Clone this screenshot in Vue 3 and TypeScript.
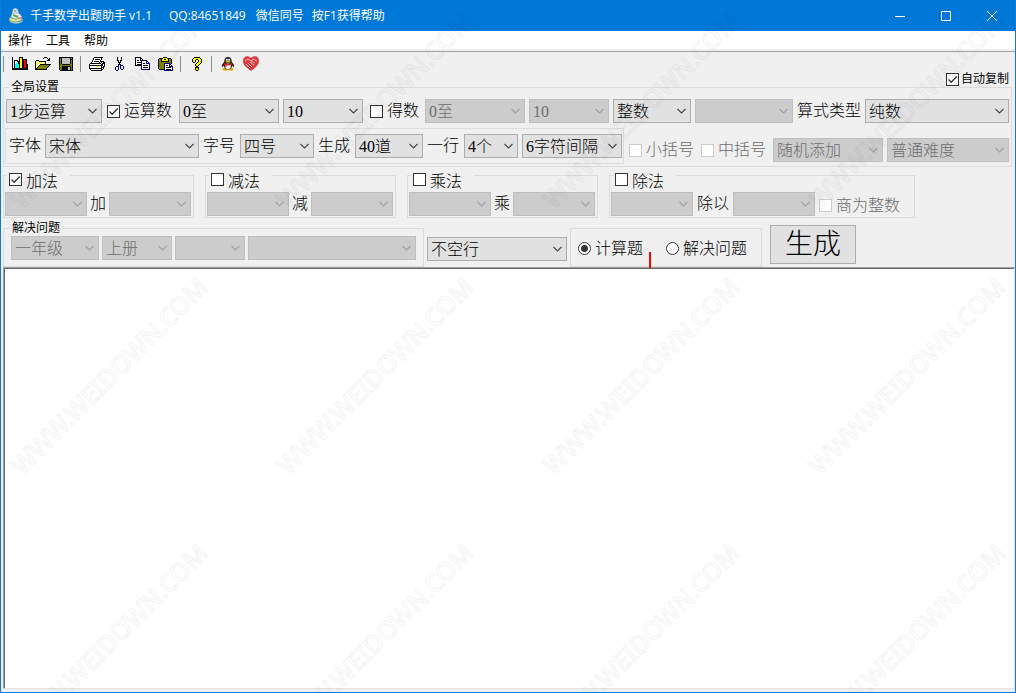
<script setup lang="ts">
import { reactive, ref } from 'vue'

interface Run { x: number; y: number; w: number; fill: string }
interface Glyph { width: number; height: number; runs: Run[] }
interface Operation { id: string; name: string; joint: string; on: boolean; whole?: boolean }

const palette: Record<string, string> = {
  k: '#000', w: '#fff', y: '#808000', Y: '#ffff00', b: '#000080',
  r: '#ff0000', c: '#00ffff', g: '#c0c0c0',
}

function glyph(rows: string[]): Glyph {
  const runs: Run[] = []
  rows.forEach((row, y) => {
    let x = 0
    while (x < row.length) {
      let end = x + 1
      while (end < row.length && row[end] === row[x]) end++
      if (row[x] !== '.') runs.push({ x, y, w: end - x, fill: palette[row[x]] })
      x = end
    }
  })
  return { width: Math.max(...rows.map(r => r.length)), height: rows.length, runs }
}

const chart = glyph([
  'k......kkkk.....',
  'k......kYYk.....',
  'k......kYYkkkkk.',
  'k.kkkk.kYYkkrrk.',
  'k.kwwkkkYYkkrrk.',
  'k.kwwckkYYkkrrk.',
  'k.kwcckkYYkkrrk.',
  'k.kcccckYYkkrrkk',
  'k.kcccckYYkkrrkk',
  'k.kcccckYYkkrrkk',
  'k.kcccckYYkkrrkk',
  'kkkkkkkkkkkkkkkk',
  'kkkkkkkkkkkkkkkk',
])
const open = glyph([
  '.........kkk....',
  '........k...k.k.',
  '.............kk.',
  '.kkk........kkk.',
  'kYwYkkkkkkk.....',
  'kwYwYwYwYwk.....',
  'kYwYwYwYwYk.....',
  'kwYwYkkkkkkkkkkk',
  'kYwYkyyyyyyyyyk.',
  'kwYkyyyyyyyyyk..',
  'kYkyyyyyyyyyk...',
  'kkyyyyyyyyyk....',
  'kkkkkkkkkkkk....',
])
const save = glyph([
  'kkkkkkkkkkkkkk',
  'kykggggggggkgk',
  'kykggggggggkkk',
  'kykggggggggkyk',
  'kykggggggggkyk',
  'kykggggggggkyk',
  'kykggggggggkyk',
  'kyykkkkkkkkyyk',
  'kyyyyyyyyyyyyk',
  'kyykkkkkkkkkyk',
  'kyykkkkkkggkyk',
  'kyykkkkkkggkyk',
  'kyykkkkkkggkyk',
  '.kkkkkkkkkkkkk',
])
const print = glyph([
  '.....kkkkkkkkk..',
  '....kwwwwwwwk...',
  '....kwkkkkkwk...',
  '...kwwwwwwwk....',
  '...kwkkkkkwkkkk.',
  '..kwwwwwwwk.k.kk',
  '.kkkkkkkkkkk.kkk',
  'kwwwwwwwwwwwkkwk',
  'kkkkkkkkkkkkkkwk',
  'kwwwwwwYYYwwkwkk',
  'kwwwwwwwwwwwkkk.',
  'kkkkkkkkkkkkkwk.',
  '.kwwwwwwwwwwkk..',
  '..kkkkkkkkkkk...',
])
const cut = glyph([
  '..k...k...',
  '..k...k...',
  '..k...k...',
  '..kk.kk...',
  '...k.k....',
  '...kkk....',
  '....k.....',
  '...bkb....',
  '...b.bbb..',
  '.bbb.b..b.',
  'b..b.b..b.',
  'b..b.b..b.',
  'b..b..bb..',
  '.bb.......',
])
const copy = glyph([
  'kkkkkk.........',
  'kwwwwkk........',
  'kwwwwkwk.......',
  'kwkkwkbbbbbb...',
  'kwwwwwbwwwwbb..',
  'kwkkkkbwwwwbwb.',
  'kwwwwwbwkkwbbbb',
  'kwkkkkbwwwwwwwb',
  'kkkkkkbwkkkkkwb',
  '......bwwwwwwwb',
  '......bwkkkkkwb',
  '......bwwwwwwwb',
  '......bbbbbbbbb',
])
const paste = glyph([
  '.....kkkk......',
  '.kkkkYYYYkkkk..',
  'kyykYYkkYYkyyk.',
  'kyykYYYYYYkyyk.',
  'kyykkkkkkkkyyk.',
  'kyyyyyyyyyyyyk.',
  'kyyyyybbbbbbyk.',
  'kyyyyybwwwwbb..',
  'kyyyyybwkkwbwb.',
  'kyyyyybwwwwbbbb',
  'kyyyyybwkkkkkwb',
  'kyyyyybwwwwwwwb',
  '.kkkkkbwkkkkkwb',
  '......bbbbbbbbb',
])
const help = glyph([
  '..kkkkkk..',
  '.kYYYYYYk.',
  'kYYYkkYYYk',
  'kYYk..kYYk',
  'kYYk..kYYk',
  '.kk..kYYYk',
  '....kYYYk.',
  '...kYYYk..',
  '...kYYk...',
  '....kk....',
  '...kkkk...',
  '...kYYk...',
  '...kYYk...',
  '....kk....',
])

const toolGroups = [
  [{ label: '新建', icon: chart }, { label: '打开', icon: open }, { label: '保存', icon: save }],
  [{ label: '打印', icon: print }, { label: '剪切', icon: cut }, { label: '复制', icon: copy }, { label: '粘贴', icon: paste }],
  [{ label: '帮助', icon: help }],
]

const menus = ['操作', '工具', '帮助']
const operations = reactive<Operation[]>([
  { id: 'add', name: '加法', joint: '加', on: true },
  { id: 'sub', name: '减法', joint: '减', on: false },
  { id: 'mul', name: '乘法', joint: '乘', on: false },
  { id: 'div', name: '除法', joint: '除以', on: false, whole: true },
])

const autoCopy = ref(true)
const operandOn = ref(true)
const resultOn = ref(false)
const mode = ref('calc')
const output = ref('')

const marks = [-1, 0, 1, 2].flatMap(row => [0, 1, 2, 3].map(col => ({ x: 21 + col * 266, y: 210 + row * 266 })))
</script>

<template>
  <div class="window">
    <header class="titlebar">
      <svg class="app-icon" viewBox="0 0 16 16" aria-hidden="true">
        <path d="M1 11Q8 15 15 11L14 14Q8 17 2 14z" fill="#e8d9b0" />
        <path d="M1 9h13l1 4q-7 3-14 0z" fill="#57a7b0" />
        <path d="M2 11q6 3 11 0" stroke="#f4e27a" stroke-width="2" fill="none" />
        <path d="M4 6h8l2 3q-5 3-11 0z" fill="#e9edf0" />
        <path d="M5 7l5 2" stroke="#70a75a" stroke-width="2" />
        <path d="M5 1l3-1 2 2 1 4H4z" fill="#c8dae2" />
        <circle cx="7" cy="3" r="1" fill="#e79b62" />
        <path d="M10 10h4" stroke="#d96b4b" />
      </svg>
      <h1 class="title"><span>千手数学出题助手 v1.1</span><span>QQ:84651849</span><span class="near">微信同号</span><span class="near">按F1获得帮助</span></h1>
      <div class="window-buttons">
        <button type="button" aria-label="最小化"><svg viewBox="0 0 10 10"><path d="M0 5.5h10" /></svg></button>
        <button type="button" aria-label="最大化"><svg viewBox="0 0 10 10"><path d="M.5.5h9v9h-9z" /></svg></button>
        <button type="button" aria-label="关闭"><svg viewBox="0 0 10 10"><path d="M0 0l10 10M10 0L0 10" /></svg></button>
      </div>
    </header>

    <nav class="menubar">
      <button v-for="item in menus" :key="item" type="button">{{ item }}</button>
    </nav>

    <main class="panel">
      <div class="top">
        <div class="toolbar" role="toolbar">
          <div v-for="(group, g) in toolGroups" :key="g" class="tool-group">
            <button v-for="tool in group" :key="tool.label" type="button" :aria-label="tool.label">
              <svg :width="tool.icon.width" :height="tool.icon.height" :viewBox="`0 0 ${tool.icon.width} ${tool.icon.height}`" shape-rendering="crispEdges">
                <rect v-for="(run, i) in tool.icon.runs" :key="i" :x="run.x" :y="run.y" :width="run.w" height="1" :fill="run.fill" />
              </svg>
            </button>
          </div>
          <div class="tool-group">
            <button type="button" aria-label="QQ">
              <svg width="14" height="14" viewBox="0 0 14 15">
                <ellipse cx="4" cy="13" rx="3" ry="1.6" fill="#f0a000" />
                <ellipse cx="10" cy="13" rx="3" ry="1.6" fill="#f0a000" />
                <path d="M7 0C4 0 3 2 3 5 1 7 0 9 .5 11l2-1.5C3 12 4.5 13.5 7 13.5S11 12 11.5 9.5l2 1.5C14 9 13 7 11 5 11 2 10 0 7 0z" fill="#222" />
                <ellipse cx="7" cy="10" rx="3" ry="3" fill="#fff" />
                <circle cx="5.7" cy="3" r="1.1" fill="#fff" />
                <circle cx="8.3" cy="3" r="1.1" fill="#fff" />
                <ellipse cx="7" cy="5" rx="2.6" ry="1" fill="#f5b400" />
                <path d="M2.5 6.5q4.5 2 9 0v1.5q-4.5 2-9 0z" fill="#e02020" />
                <path d="M4 8h1.5v2.5H4z" fill="#e02020" />
              </svg>
            </button>
            <button type="button" aria-label="支持">
              <svg width="16" height="15" viewBox="0 0 16 15">
                <path d="M8 15C4 12 0 9 0 5 0 0 5-1 8 2c3-3 8-2 8 3 0 4-4 7-8 10z" fill="#e0393e" />
                <path d="M2 5l3-2 3 2 2-2 4 2M3 8l4 4M5 7l4 4M7 6l4 3M8 5l4 2" fill="none" stroke="#f3b9b6" />
              </svg>
            </button>
          </div>
        </div>
        <label class="check small"><input v-model="autoCopy" type="checkbox">自动复制</label>
      </div>

      <fieldset class="global">
        <legend>全局设置</legend>
        <div class="row first">
          <select class="w96" aria-label="步数"><option>1步运算</option></select>
          <label class="check operand"><input v-model="operandOn" type="checkbox">运算数</label>
          <select class="w100" aria-label="运算数下限"><option>0至</option></select>
          <select class="w80" aria-label="运算数上限"><option>10</option></select>
          <label class="check result"><input v-model="resultOn" type="checkbox">得数</label>
          <select class="w100" aria-label="得数下限" disabled><option>0至</option></select>
          <select class="w80" aria-label="得数上限" disabled><option>10</option></select>
          <select class="w78" aria-label="数型"><option>整数</option></select>
          <select class="w98" aria-label="小数位" disabled><option></option></select>
          <label for="formula">算式类型</label>
          <select id="formula" class="fill"><option>纯数</option></select>
        </div>
        <div class="row second">
          <div class="row frame format">
            <label for="font" class="tight">字体</label>
            <select id="font" class="w154"><option>宋体</option></select>
            <label for="size">字号</label>
            <select id="size" class="w74"><option>四号</option></select>
            <label for="count">生成</label>
            <select id="count" class="w68"><option>40道</option></select>
            <label for="columns">一行</label>
            <select id="columns" class="w54"><option>4个</option></select>
            <select class="w100" aria-label="间隔"><option>6字符间隔</option></select>
          </div>
          <div class="row brackets">
            <label class="check off"><input type="checkbox" disabled>小括号</label>
            <label class="check off"><input type="checkbox" disabled>中括号</label>
            <select class="w110" aria-label="添加方式" disabled><option>随机添加</option></select>
            <select class="fill" aria-label="难度" disabled><option>普通难度</option></select>
          </div>
        </div>
      </fieldset>

      <div class="operations">
        <section v-for="op in operations" :key="op.id" class="frame operation" :class="{ wide: op.whole }">
          <label class="check heading"><input v-model="op.on" type="checkbox">{{ op.name }}</label>
          <div class="row operands">
            <select class="w82" :aria-label="op.name + '左'" disabled><option></option></select>
            <span>{{ op.joint }}</span>
            <select class="w82" :aria-label="op.name + '右'" disabled><option></option></select>
            <label v-if="op.whole" class="check off whole"><input type="checkbox" disabled>商为整数</label>
          </div>
        </section>
      </div>

      <div class="bottom">
        <fieldset class="problems">
          <legend>解决问题</legend>
          <div class="row">
            <select class="w88" aria-label="年级" disabled><option>一年级</option></select>
            <select class="w70" aria-label="册" disabled><option>上册</option></select>
            <select class="w70" aria-label="单元" disabled><option></option></select>
            <select class="w168" aria-label="题型" disabled><option></option></select>
          </div>
        </fieldset>
        <select class="w140 blank" aria-label="空行"><option>不空行</option></select>
        <div class="frame modes" role="radiogroup" aria-label="题目类型">
          <label class="check"><input v-model="mode" type="radio" value="calc">计算题</label>
          <label class="check"><input v-model="mode" type="radio" value="solve">解决问题</label>
          <i class="marker"></i>
        </div>
        <button type="button" class="generate">生成</button>
      </div>
    </main>

    <textarea v-model="output" class="output" aria-label="题目"></textarea>

    <svg class="watermark" aria-hidden="true">
      <text v-for="(m, i) in marks" :key="i" :transform="`translate(${m.x} ${m.y}) rotate(-45)`">WWW.WEIDOWN.COM</text>
    </svg>
  </div>
</template>

<style>
html, body, #app { height: 100%; }
body { margin: 0; }
</style>

<style scoped>
* { box-sizing: border-box; }
.window {
  position: relative;
  display: flex;
  flex-direction: column;
  height: 100vh;
  overflow: hidden;
  border: 1px solid #0f7ad6;
  border-top: 0;
  background: #f0f0f0;
  color: #000;
  font: 16px/18px "Liberation Serif", "Noto Sans CJK SC", sans-serif;
  font-weight: 300;
  white-space: nowrap;
}
button, select, input, textarea { font: inherit; color: inherit; margin: 0; }
button { padding: 0; border: 0; background: none; }
.titlebar {
  display: flex;
  align-items: center;
  height: 31px;
  flex: none;
  padding-left: 7px;
  background: #0078d7;
  color: #fff;
}
.app-icon { width: 16px; height: 16px; margin-right: 6px; }
.title {
  display: flex;
  margin: 0;
  flex: 1;
  gap: 17px;
  font: 12px/16px "Open Sans", "Noto Sans CJK SC", sans-serif;
}
.title .near { margin-left: -9px; }
.title .near:nth-child(3) { margin-left: -7px; }
.window-buttons { display: flex; }
.window-buttons button { display: grid; place-items: center; width: 46px; height: 31px; }
.window-buttons svg { width: 10px; height: 10px; fill: none; stroke: #fff; }
.menubar {
  display: flex;
  gap: 14px;
  height: 18px;
  flex: none;
  padding-left: 7px;
  background: #fff;
  font: 12px/20px "Open Sans", "Noto Sans CJK SC", sans-serif;
}
.panel {
  flex: none;
  margin-top: 2px;
  padding: 0 2px;
  border-top: 1px solid #a0a0a0;
}
.top { display: flex; justify-content: space-between; height: 34px; padding-right: 4px; }
.toolbar { display: flex; height: 23px; }
.tool-group { display: flex; margin-right: 3px; }
.tool-group::before { content: ""; width: 1px; height: 16px; margin: 4px 4px 0 0; background: #8c8c8c; }
.tool-group button { display: grid; place-items: center; width: 23px; height: 23px; }
.check { display: flex; align-items: center; gap: 4px; }
.check.small { align-self: flex-end; gap: 2px; font-size: 12px; font-weight: 400; line-height: 14px; }
.operand { margin: 0 3px 0 1px; }
.result { margin: 0 2px 0 3px; }
.off { color: #6d6d6d; }
input[type="checkbox"], input[type="radio"] {
  appearance: none;
  flex: none;
  width: 13px;
  height: 13px;
  border: 1px solid #333;
  background: #fff center / 11px 11px no-repeat;
}
input[type="checkbox"]:checked {
  background-image: url("data:image/svg+xml,%3Csvg xmlns='http://www.w3.org/2000/svg' viewBox='0 0 11 11'%3E%3Cpath d='M1.5 5.5l2.7 2.7L9.7 2.5' fill='none' stroke='%23333' stroke-width='1.3'/%3E%3C/svg%3E");
}
input[type="checkbox"]:disabled { border-color: #ccc; }
input[type="radio"] { border-radius: 50%; }
input[type="radio"]:checked { background: radial-gradient(circle, #333 0 3px, #fff 4px); }
select {
  appearance: none;
  flex: none;
  height: 24px;
  padding: 1px 18px 0 3px;
  border: 1px solid #adadad;
  border-radius: 0;
  opacity: 1;
  background: #e1e1e1 right 4px center / 9px 6px no-repeat url("data:image/svg+xml,%3Csvg xmlns='http://www.w3.org/2000/svg' viewBox='0 0 9 6'%3E%3Cpath d='M.5 1l4 4 4-4' fill='none' stroke='%23444' stroke-width='1.1'/%3E%3C/svg%3E");
}
select:disabled {
  border-color: #bfbfbf;
  color: #6d6d6d;
  opacity: 1;
  background: #ccc right 4px center / 9px 6px no-repeat url("data:image/svg+xml,%3Csvg xmlns='http://www.w3.org/2000/svg' viewBox='0 0 9 6'%3E%3Cpath d='M.5 1l4 4 4-4' fill='none' stroke='%23a0a0a0' stroke-width='1.1'/%3E%3C/svg%3E");
}
.w54 { width: 54px; }
.w68 { width: 68px; }
.w70 { width: 70px; }
.w74 { width: 74px; }
.w78 { width: 78px; }
.w80 { width: 80px; }
.w82 { width: 82px; }
.w88 { width: 88px; }
.w96 { width: 96px; }
.w98 { width: 98px; }
.w100 { width: 100px; }
.w110 { width: 110px; }
.w140 { width: 140px; }
.w154 { width: 154px; }
.w168 { width: 168px; }
.fill { flex: 1; min-width: 0; }
.row { display: flex; align-items: center; gap: 4px; }
fieldset { min-width: 0; margin: 0; border: 1px solid #dcdcdc; }
legend { padding: 0 2px; font-size: 12px; font-weight: 400; line-height: 14px; }
.frame { border: 1px solid #dcdcdc; }
.global { margin: -6px 1px 0 0; padding: 5px 2px 2px 1px; }
.global legend { margin-left: 4px; }
.first { padding-left: 1px; }
.second { align-items: flex-end; margin-top: 5px; }
.format { height: 36px; padding: 0 1px 0 3px; }
.format label { margin-right: 1px; }
.format .tight { margin-right: 0; }
.brackets { flex: 1; margin-left: 1px; padding-bottom: 2px; }
.brackets .check { margin-right: 3px; }
.operations { display: flex; gap: 11px; margin-top: 8px; }
.operation { width: 191px; height: 43px; padding: 0 1px; }
.operation.wide { width: 306px; }
.heading {
  align-items: flex-start;
  width: 63px;
  height: 19px;
  margin: -3px 0 0 2px;
  padding-left: 2px;
  background: #f0f0f0;
}
.operands { gap: 3px; }
.wide .operands { gap: 4px; }
.whole { margin-top: 3px; }
.bottom { display: flex; align-items: flex-start; margin-top: 3px; }
.problems { width: 421px; height: 46px; padding: 1px 6px 0 7px; }
.problems legend { margin-left: -1px; }
.problems .row { gap: 3px; }
.blank { margin: 16px 3px 0; }
.modes {
  position: relative;
  display: flex;
  gap: 23px;
  width: 192px;
  height: 39px;
  margin-top: 7px;
  padding: 2px 7px 0;
}
.marker { position: absolute; left: 78px; bottom: -2px; width: 2px; height: 16px; background: #f00; }
.generate {
  width: 86px;
  height: 39px;
  margin: 4px 0 0 8px;
  border: 1px solid #adadad;
  background: #e1e1e1;
  font-size: 28px;
  line-height: 36px;
}
.output {
  flex: 1;
  min-height: 0;
  margin: 0 0 3px 2px;
  padding: 4px;
  resize: none;
  outline: 0;
  border: 1px solid #a0a0a0;
  border-right-color: #e3e3e3;
  border-bottom-color: #e3e3e3;
  border-radius: 0;
  box-shadow: inset 1px 1px #696969;
  background: #fff;
}
.watermark { position: absolute; inset: 0; width: 100%; height: 100%; pointer-events: none; }
.watermark text {
  font: 500 25px "Noto Sans", sans-serif;
  fill: none;
  stroke: #000;
  stroke-opacity: 0.04;
  stroke-width: 2px;
}
</style>
